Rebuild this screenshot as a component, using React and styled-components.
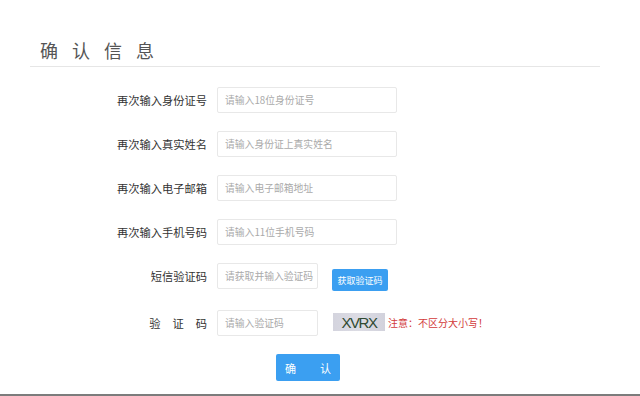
import React from "react";
import styled, { createGlobalStyle } from "styled-components";

const Global = createGlobalStyle`
  html, body { margin: 0; padding: 0; background: #fff; }
  body { font-family: "Noto Sans CJK SC", "Noto Sans", sans-serif; color: #333; }
  #root { width: 640px; height: 396px; overflow: hidden; }
`;

const Page = styled.div`
  position: relative;
  width: 640px;
  height: 396px;
  display: flex;
  flex-direction: column;
  align-items: flex-start;
  box-sizing: border-box;
  padding-top: 38px;
`;

const Title = styled.h2`
  margin: 0 0 0 40px;
  font-size: 18px;
  line-height: 24px;
  font-weight: 400;
  letter-spacing: 14px;
  color: #555;
`;

const Divider = styled.div`
  margin: 4px 0 0 30px;
  width: 570px;
  height: 1px;
  background: #e6e6e6;
`;

const Form = styled.div`
  display: flex;
  flex-direction: column;
  margin-top: 20px;
`;

const Row = styled.div`
  display: flex;
  align-items: center;
  height: 26px;
  margin-top: ${(p) => p.$gap || 0}px;
`;

const Label = styled.label`
  width: 207px;
  margin-right: 10px;
  text-align: right;
  font-size: 11.25px;
  color: #333;
  white-space: nowrap;
`;

const Spaced = styled.span`
  letter-spacing: 12px;
  margin-right: -12px;
`;

const Input = styled.input`
  box-sizing: border-box;
  width: ${(p) => (p.$short ? 101 : 180)}px;
  height: 26px;
  border: 1px solid #e8e8e8;
  border-radius: 2px;
  padding: 0 2px 0 7px;
  font-family: "Noto Sans CJK SC", sans-serif;
  font-size: 9.8px;
  color: #333;
  outline: none;
  &::placeholder { color: #aaa; }
`;

const SmsButton = styled.button`
  margin-left: 14px;
  width: 56px;
  height: 22px;
  border: none;
  border-radius: 2px;
  background: #3b9ff1;
  color: #fff;
  font-family: "Noto Sans CJK SC", sans-serif;
  font-size: 9px;
  padding: 0;
  position: relative;
  top: 4px;
  white-space: nowrap;
`;

const CaptchaGroup = styled.div`
  display: flex;
  align-items: center;
  margin-left: 15px;
  position: relative;
  top: -1px;
`;

const Captcha = styled.div`
  width: 52px;
  height: 18px;
  background: linear-gradient(90deg, #d4d4de, #dcdce4 50%, #d2d2dc);
  display: flex;
  align-items: center;
  justify-content: center;
  font-family: "Liberation Sans", sans-serif;
  font-size: 15px;
  letter-spacing: -1.5px;
  color: #2f4a32;
`;

const Notice = styled.span`
  margin-left: 3px;
  font-size: 10px;
  color: #d23a3a;
  white-space: nowrap;
`;

const Submit = styled.button`
  margin: 18px 0 0 276px;
  width: 64px;
  height: 27px;
  border: none;
  border-radius: 2px;
  background: #3b9ff1;
  color: #fff;
  font-family: "Noto Sans CJK SC", sans-serif;
  font-size: 11px;
  padding: 0;
  display: flex;
  align-items: center;
  justify-content: center;
  gap: 24px;
  white-space: nowrap;
`;

const BottomEdge = styled.div`
  position: absolute;
  left: 0;
  bottom: 0;
  width: 640px;
  height: 2px;
  background: #7c7c7c;
`;

export default function App() {
  return (
    <Page>
      <Global />
      <Title>确认信息</Title>
      <Divider />
      <Form>
        <Row>
          <Label>再次输入身份证号</Label>
          <Input placeholder="请输入18位身份证号" />
        </Row>
        <Row $gap={18}>
          <Label>再次输入真实姓名</Label>
          <Input placeholder="请输入身份证上真实姓名" />
        </Row>
        <Row $gap={18}>
          <Label>再次输入电子邮箱</Label>
          <Input placeholder="请输入电子邮箱地址" />
        </Row>
        <Row $gap={18}>
          <Label>再次输入手机号码</Label>
          <Input placeholder="请输入11位手机号码" />
        </Row>
        <Row $gap={18}>
          <Label>短信验证码</Label>
          <Input $short placeholder="请获取并输入验证码" />
          <SmsButton>获取验证码</SmsButton>
        </Row>
        <Row $gap={21}>
          <Label><Spaced>验证码</Spaced></Label>
          <Input $short placeholder="请输入验证码" />
          <CaptchaGroup>
            <Captcha>XVRX</Captcha>
            <Notice>注意：不区分大小写！</Notice>
          </CaptchaGroup>
        </Row>
      </Form>
      <Submit><span>确</span><span>认</span></Submit>
      <BottomEdge />
    </Page>
  );
}
